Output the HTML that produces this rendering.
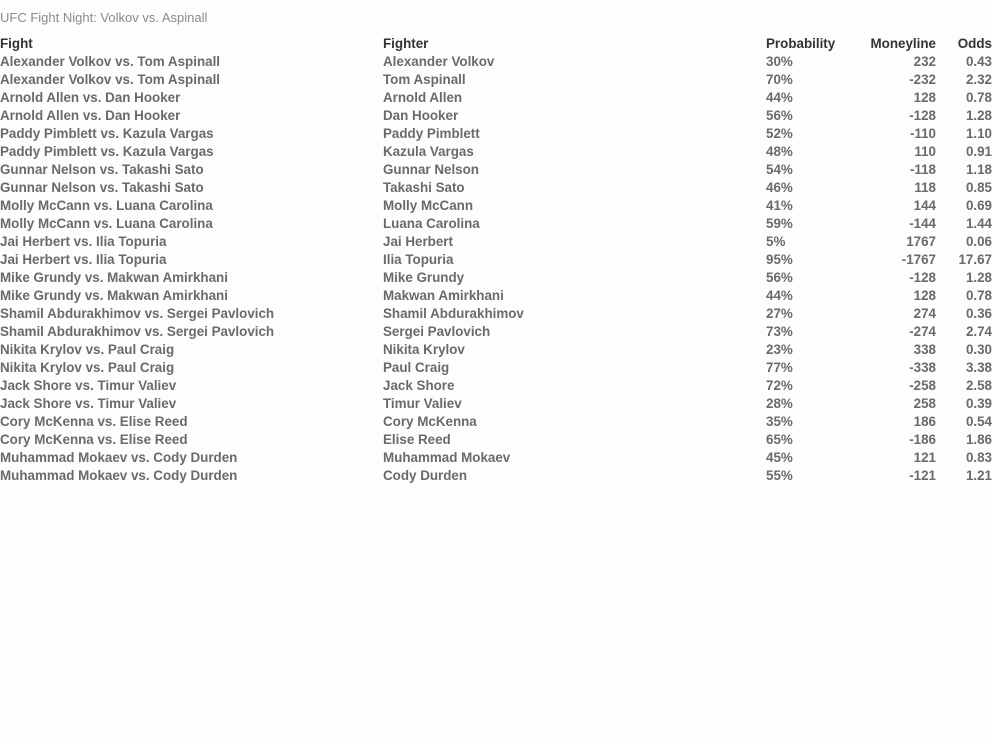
<!DOCTYPE html>
<html><head><meta charset="utf-8"><style>
body{margin:0;background:#fdfdfd;font-family:"Liberation Sans",sans-serif;width:992px;height:744px;overflow:hidden}
.t{position:absolute;left:0;top:10px;font-size:13px;color:#8a8a8a}
table{position:absolute;left:0;top:35px;border-collapse:collapse;width:992px;table-layout:fixed;font-size:13.4px;font-weight:bold;color:#6a6a6a}
td,th{padding:0;height:18px;line-height:18px;white-space:nowrap;overflow:visible}
th{color:#333;text-align:left}
.r{text-align:right}
</style></head><body>
<div class="t">UFC Fight Night: Volkov vs. Aspinall</div>
<table>
<colgroup><col style="width:383px"><col style="width:383px"><col style="width:100px"><col style="width:70px"><col style="width:56px"></colgroup>
<tr><th>Fight</th><th>Fighter</th><th>Probability</th><th class="r">Moneyline</th><th class="r">Odds</th></tr>
<tr><td>Alexander Volkov vs. Tom Aspinall</td><td>Alexander Volkov</td><td>30%</td><td class="r">232</td><td class="r">0.43</td></tr>
<tr><td>Alexander Volkov vs. Tom Aspinall</td><td>Tom Aspinall</td><td>70%</td><td class="r">-232</td><td class="r">2.32</td></tr>
<tr><td>Arnold Allen vs. Dan Hooker</td><td>Arnold Allen</td><td>44%</td><td class="r">128</td><td class="r">0.78</td></tr>
<tr><td>Arnold Allen vs. Dan Hooker</td><td>Dan Hooker</td><td>56%</td><td class="r">-128</td><td class="r">1.28</td></tr>
<tr><td>Paddy Pimblett vs. Kazula Vargas</td><td>Paddy Pimblett</td><td>52%</td><td class="r">-110</td><td class="r">1.10</td></tr>
<tr><td>Paddy Pimblett vs. Kazula Vargas</td><td>Kazula Vargas</td><td>48%</td><td class="r">110</td><td class="r">0.91</td></tr>
<tr><td>Gunnar Nelson vs. Takashi Sato</td><td>Gunnar Nelson</td><td>54%</td><td class="r">-118</td><td class="r">1.18</td></tr>
<tr><td>Gunnar Nelson vs. Takashi Sato</td><td>Takashi Sato</td><td>46%</td><td class="r">118</td><td class="r">0.85</td></tr>
<tr><td>Molly McCann vs. Luana Carolina</td><td>Molly McCann</td><td>41%</td><td class="r">144</td><td class="r">0.69</td></tr>
<tr><td>Molly McCann vs. Luana Carolina</td><td>Luana Carolina</td><td>59%</td><td class="r">-144</td><td class="r">1.44</td></tr>
<tr><td>Jai Herbert vs. Ilia Topuria</td><td>Jai Herbert</td><td>5%</td><td class="r">1767</td><td class="r">0.06</td></tr>
<tr><td>Jai Herbert vs. Ilia Topuria</td><td>Ilia Topuria</td><td>95%</td><td class="r">-1767</td><td class="r">17.67</td></tr>
<tr><td>Mike Grundy vs. Makwan Amirkhani</td><td>Mike Grundy</td><td>56%</td><td class="r">-128</td><td class="r">1.28</td></tr>
<tr><td>Mike Grundy vs. Makwan Amirkhani</td><td>Makwan Amirkhani</td><td>44%</td><td class="r">128</td><td class="r">0.78</td></tr>
<tr><td>Shamil Abdurakhimov vs. Sergei Pavlovich</td><td>Shamil Abdurakhimov</td><td>27%</td><td class="r">274</td><td class="r">0.36</td></tr>
<tr><td>Shamil Abdurakhimov vs. Sergei Pavlovich</td><td>Sergei Pavlovich</td><td>73%</td><td class="r">-274</td><td class="r">2.74</td></tr>
<tr><td>Nikita Krylov vs. Paul Craig</td><td>Nikita Krylov</td><td>23%</td><td class="r">338</td><td class="r">0.30</td></tr>
<tr><td>Nikita Krylov vs. Paul Craig</td><td>Paul Craig</td><td>77%</td><td class="r">-338</td><td class="r">3.38</td></tr>
<tr><td>Jack Shore vs. Timur Valiev</td><td>Jack Shore</td><td>72%</td><td class="r">-258</td><td class="r">2.58</td></tr>
<tr><td>Jack Shore vs. Timur Valiev</td><td>Timur Valiev</td><td>28%</td><td class="r">258</td><td class="r">0.39</td></tr>
<tr><td>Cory McKenna vs. Elise Reed</td><td>Cory McKenna</td><td>35%</td><td class="r">186</td><td class="r">0.54</td></tr>
<tr><td>Cory McKenna vs. Elise Reed</td><td>Elise Reed</td><td>65%</td><td class="r">-186</td><td class="r">1.86</td></tr>
<tr><td>Muhammad Mokaev vs. Cody Durden</td><td>Muhammad Mokaev</td><td>45%</td><td class="r">121</td><td class="r">0.83</td></tr>
<tr><td>Muhammad Mokaev vs. Cody Durden</td><td>Cody Durden</td><td>55%</td><td class="r">-121</td><td class="r">1.21</td></tr>
</table>
</body></html>
